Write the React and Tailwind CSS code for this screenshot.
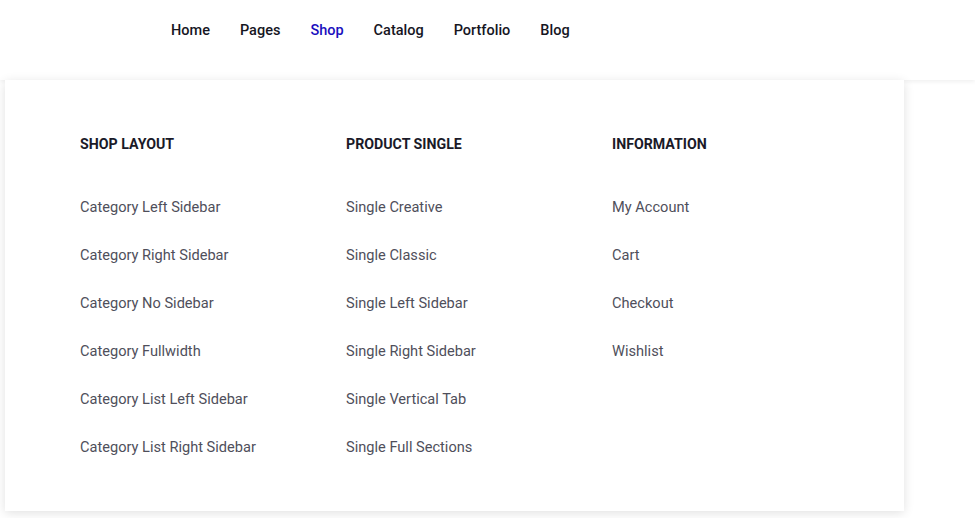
import React from 'react';

const navItems = ['Home', 'Pages', 'Shop', 'Catalog', 'Portfolio', 'Blog'];

const columns = [
  {
    title: 'Shop Layout',
    links: [
      'Category Left Sidebar',
      'Category Right Sidebar',
      'Category No Sidebar',
      'Category Fullwidth',
      'Category List Left Sidebar',
      'Category List Right Sidebar',
    ],
  },
  {
    title: 'Product Single',
    links: [
      'Single Creative',
      'Single Classic',
      'Single Left Sidebar',
      'Single Right Sidebar',
      'Single Vertical Tab',
      'Single Full Sections',
    ],
  },
  {
    title: 'Information',
    links: ['My Account', 'Cart', 'Checkout', 'Wishlist'],
  },
];

const App = () => {
  return (
    <div className="min-h-[518px] bg-white font-['Roboto',sans-serif]">
      {/* top nav */}
      <header className="relative z-10 h-[80px] bg-white shadow-[0_2px_4px_rgba(0,0,0,0.06)]">
        <nav className="flex gap-[30px] pl-[171px] pt-[21px]">
          {navItems.map((item) => (
            <a
              key={item}
              href="#"
              className={`text-[14.5px] leading-[20px] font-medium ${
                item === 'Shop' ? 'text-[#1a0fbe]' : 'text-[#16161f]'
              }`}
            >
              {item}
            </a>
          ))}
        </nav>
      </header>

      {/* mega menu dropdown */}
      <div className="relative z-20 ml-[5px] w-[899px] bg-white shadow-[0_2px_10px_rgba(0,0,0,0.12)]">
        <div className="grid grid-cols-[266px_266px_1fr] pl-[75px] pt-[54px] pb-[54px]">
          {columns.map((col) => (
            <div key={col.title}>
              <h4 className="text-[14.2px] leading-[20px] font-bold uppercase text-[#1a1a28]">
                {col.title}
              </h4>
              <ul className="mt-[43px] flex flex-col gap-[28px]">
                {col.links.map((link) => (
                  <li key={link} className="leading-[20px]">
                    <a href="#" className="block text-[14.6px] leading-[20px] text-[#4f4f5b]">
                      {link}
                    </a>
                  </li>
                ))}
              </ul>
            </div>
          ))}
        </div>
      </div>
    </div>
  );
};

export default App;
